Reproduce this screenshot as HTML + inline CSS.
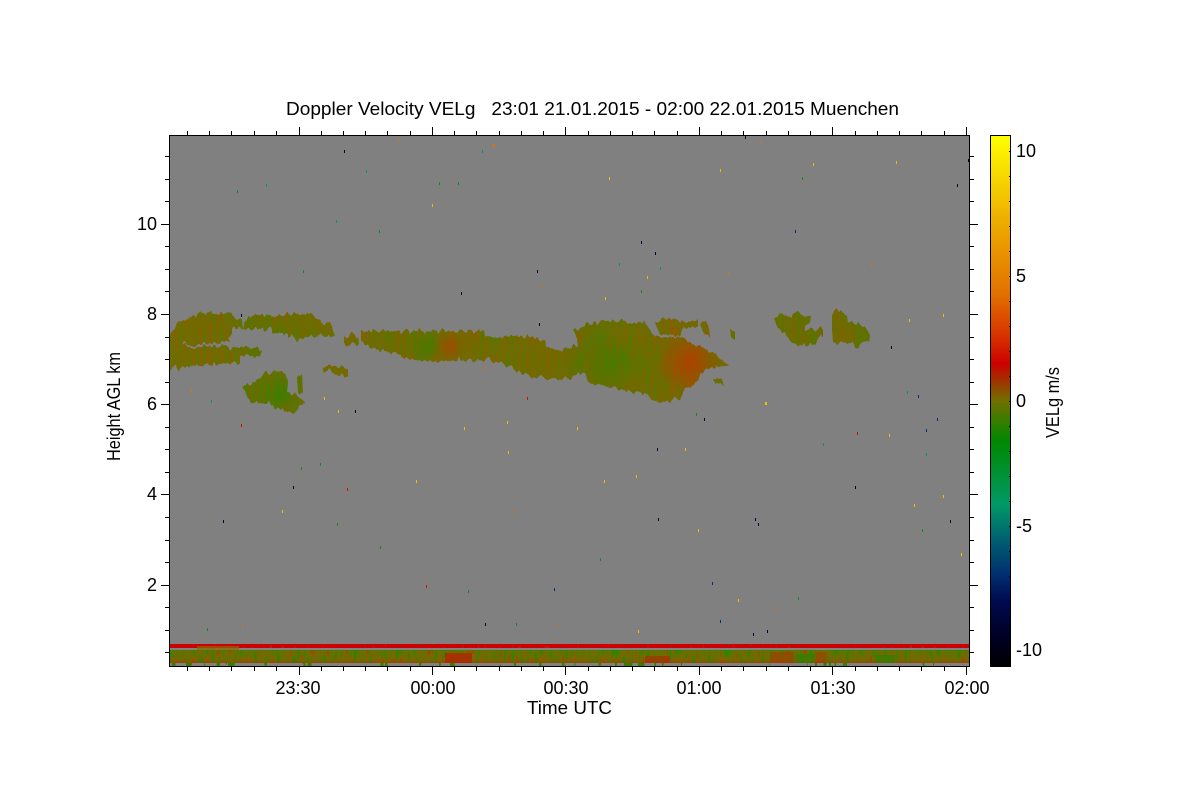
<!DOCTYPE html>
<html lang="en">
<head>
<meta charset="utf-8">
<title>Doppler Velocity VELg</title>
<style>
html,body{margin:0;padding:0;background:#fff}
svg{display:block}
text{font-family:"Liberation Sans",sans-serif;font-size:18px;fill:#000}
</style>
</head>
<body>
<svg width="1200" height="800" viewBox="0 0 1200 800" xmlns="http://www.w3.org/2000/svg">
<defs>
<linearGradient id="cb" x1="0" y1="135" x2="0" y2="667" gradientUnits="userSpaceOnUse">
<stop offset="0" stop-color="#ffff00"/>
<stop offset=".16" stop-color="#eeae00"/>
<stop offset=".30" stop-color="#e27000"/>
<stop offset=".385" stop-color="#d62c00"/>
<stop offset=".43" stop-color="#cc0000"/>
<stop offset=".47" stop-color="#954000"/>
<stop offset=".5" stop-color="#707000"/>
<stop offset=".575" stop-color="#008800"/>
<stop offset=".695" stop-color="#009966"/>
<stop offset=".76" stop-color="#006070"/>
<stop offset=".825" stop-color="#003070"/>
<stop offset=".875" stop-color="#000a50"/>
<stop offset=".95" stop-color="#000020"/>
<stop offset="1" stop-color="#000000"/>
</linearGradient>
<linearGradient id="cg" x1="169" y1="0" x2="880" y2="0" gradientUnits="userSpaceOnUse">
<stop offset="0" stop-color="#7a6b00"/>
<stop offset=".05" stop-color="#7d6600"/>
<stop offset=".09" stop-color="#6f6c00"/>
<stop offset=".115" stop-color="#517800"/>
<stop offset=".18" stop-color="#6b6f00"/>
<stop offset=".22" stop-color="#7a6800"/>
<stop offset=".27" stop-color="#7a6800"/>
<stop offset=".33" stop-color="#6f6c00"/>
<stop offset=".365" stop-color="#6a7000"/>
<stop offset=".395" stop-color="#8a5f00"/>
<stop offset=".42" stop-color="#766a00"/>
<stop offset=".48" stop-color="#6f6c00"/>
<stop offset=".53" stop-color="#7f6500"/>
<stop offset=".58" stop-color="#626f00"/>
<stop offset=".64" stop-color="#647200"/>
<stop offset=".68" stop-color="#6e6d00"/>
<stop offset=".71" stop-color="#8c5e00"/>
<stop offset=".76" stop-color="#7a6800"/>
<stop offset=".85" stop-color="#6a6e00"/>
<stop offset=".91" stop-color="#5d7200"/>
<stop offset=".95" stop-color="#7a6800"/>
<stop offset=".97" stop-color="#567600"/>
<stop offset="1" stop-color="#7a6600"/>
</linearGradient>
<radialGradient id="hot" cx="690" cy="363" r="32" gradientUnits="userSpaceOnUse">
<stop offset="0" stop-color="#b04000" stop-opacity=".95"/>
<stop offset=".6" stop-color="#a04c00" stop-opacity=".6"/>
<stop offset="1" stop-color="#904f00" stop-opacity="0"/>
</radialGradient>
<radialGradient id="hot2" cx="449" cy="347" r="16" gradientUnits="userSpaceOnUse">
<stop offset="0" stop-color="#a04c00" stop-opacity=".9"/>
<stop offset="1" stop-color="#904f00" stop-opacity="0"/>
</radialGradient>
<radialGradient id="grn1" cx="426" cy="346" r="16" gradientUnits="userSpaceOnUse">
<stop offset="0" stop-color="#3f7d00" stop-opacity=".8"/>
<stop offset="1" stop-color="#3f7d00" stop-opacity="0"/>
</radialGradient>
<radialGradient id="grn2" cx="280" cy="395" r="22" gradientUnits="userSpaceOnUse">
<stop offset="0" stop-color="#2f8200" stop-opacity=".75"/>
<stop offset="1" stop-color="#3f7d00" stop-opacity="0"/>
</radialGradient>
<radialGradient id="grn3" cx="610" cy="362" r="32" gradientUnits="userSpaceOnUse">
<stop offset="0" stop-color="#3f7d00" stop-opacity=".55"/>
<stop offset="1" stop-color="#3f7d00" stop-opacity="0"/>
</radialGradient>

<filter id="jag" filterUnits="userSpaceOnUse" x="160" y="300" width="730" height="125" color-interpolation-filters="sRGB">
<feTurbulence type="fractalNoise" baseFrequency="0.22 0.03" numOctaves="2" seed="7" result="n"/>
<feComponentTransfer in="n" result="m">
<feFuncG type="linear" slope="0" intercept="0.5"/>
<feFuncA type="linear" slope="0" intercept="1"/>
</feComponentTransfer>
<feDisplacementMap in="SourceGraphic" in2="m" scale="11" xChannelSelector="G" yChannelSelector="R"/>
</filter>

<filter id="cloudN" filterUnits="userSpaceOnUse" x="169" y="300" width="720" height="120" color-interpolation-filters="sRGB">
<feTurbulence type="fractalNoise" baseFrequency="0.3 0.04" numOctaves="2" seed="11"/>
<feColorMatrix type="matrix" values="1 0 0 0 0 1 0 0 0 0 1 0 0 0 0 0 0 0 0 1"/>
<feComponentTransfer>
<feFuncR type="table" tableValues=".28 .28 .3 .36 .42 .5 .56 .6 .6"/>
<feFuncG type="table" tableValues=".5 .5 .49 .46 .43 .39 .36 .34 .34"/>
<feFuncB type="linear" slope="0" intercept="0"/>
</feComponentTransfer>
</filter>

<filter id="bandN" filterUnits="userSpaceOnUse" x="169" y="650" width="801" height="13" color-interpolation-filters="sRGB">
<feTurbulence type="fractalNoise" baseFrequency="0.26 0.07" numOctaves="2" seed="4"/>
<feColorMatrix type="matrix" values="1 0 0 0 0 1 0 0 0 0 1 0 0 0 0 0 0 0 0 1"/>
<feComponentTransfer>
<feFuncR type="table" tableValues=".1 .1 .15 .3 .42 .5 .6 .68 .72"/>
<feFuncG type="table" tableValues=".55 .55 .53 .48 .43 .4 .3 .2 .15"/>
<feFuncB type="linear" slope="0" intercept="0"/>
</feComponentTransfer>
</filter>

<filter id="redN" filterUnits="userSpaceOnUse" x="169" y="644" width="801" height="4" color-interpolation-filters="sRGB">
<feTurbulence type="fractalNoise" baseFrequency="0.4 0.2" numOctaves="1" seed="9"/>
<feColorMatrix type="matrix" values="1 0 0 0 0 1 0 0 0 0 1 0 0 0 0 0 0 0 0 1"/>
<feComponentTransfer>
<feFuncR type="table" tableValues=".6 .68 .76 .8 .8 .8 .8 .8 .8"/>
<feFuncG type="table" tableValues=".3 .22 .1 0 0 0 0 0 0"/>
<feFuncB type="linear" slope="0" intercept="0"/>
</feComponentTransfer>
</filter>

<filter id="fringe" filterUnits="userSpaceOnUse" x="169" y="663" width="801" height="3" color-interpolation-filters="sRGB">
<feTurbulence type="fractalNoise" baseFrequency="0.18 0.01" numOctaves="2" seed="15"/>
<feColorMatrix type="matrix" values="0 0 0 0 .2 0 0 0 0 .5 0 0 0 0 0 3.5 0 0 0 -1.95"/>
<feComponentTransfer><feFuncA type="discrete" tableValues="0 1 1"/></feComponentTransfer>
</filter>

<linearGradient id="bandV" x1="0" y1="650" x2="0" y2="663" gradientUnits="userSpaceOnUse">
<stop offset="0" stop-color="#3f8000" stop-opacity=".35"/>
<stop offset=".5" stop-color="#707000" stop-opacity="0"/>
<stop offset="1" stop-color="#b03000" stop-opacity=".5"/>
</linearGradient>

<clipPath id="cl">
<polygon points="169,336 175,326 182,319 196,317 198,314 232,313 234,319 242,321 243,328 232,329 232,334 228,336 230,339 225,343 192,344 183,344 182,346 200,346 225,347 258,348 262,351 258,357 240,357 240,363 205,365 170,368 169,368"/>
<polygon points="245,319 253,315 312,315 317,321 330,323 335,335 312,336 308,338 295,338 288,336 288,333 272,333 272,329 243,329"/>
<polygon points="344,337 352,334 358,335 359,343 350,343 344,344"/>
<polygon points="323,366 338,366 348,369 348,376 335,375 330,371 323,371"/>
<polygon points="242,384 257,382 263,374 285,372 288,382 287,392 297,396 305,402 292,413 275,408 270,403 253,403 247,398 245,389"/>
<polygon points="297,377 302,376 303,393 298,393"/>
<polygon points="361,331 484,331 485,337 523,337 527,334 529,337 545,341 546,347 553,351 573,348 577,349 585,365 580,374 570,379 550,378 523,374 513,368 503,364 490,359 430,361 400,356 383,351 373,349 361,343"/>
<polygon points="573,332 583,326 603,321 643,322 650,329 655,337 680,337 687,341 693,346 713,351 718,356 729,365 712,368 700,373 698,381 685,389 680,398 657,403 645,393 620,389 590,383 583,371 570,376 570,347 578,347 577,339"/>
<polygon points="655,322 663,319 683,322 698,319 698,326 683,328 680,336 660,334"/>
<polygon points="700,324 706,321 709,329 710,336 703,333"/>
<polygon points="730,330 735,329 735,338 731,338"/>
<polygon points="713,379 722,381 724,386 716,385"/>
<polygon points="774,319 782,314 790,317 797,314 811,316 810,323 805,324 805,329 823,329 823,336 815,343 808,346 802,344 792,343 785,334 778,329"/>
<polygon points="832,312 837,310 847,314 848,321 857,322 865,327 870,333 869,341 858,346 842,343 833,341 832,328"/>
</clipPath>
<clipPath id="plot"><rect x="169" y="135" width="801" height="532"/></clipPath>
</defs>

<rect width="1200" height="800" fill="#fff"/>
<rect x="169" y="135" width="801" height="532" fill="#808080"/>

<g clip-path="url(#plot)">
<g filter="url(#jag)">
<g clip-path="url(#cl)">
<rect x="169" y="300" width="720" height="120" fill="url(#cg)"/>
<rect x="169" y="300" width="720" height="120" filter="url(#cloudN)" opacity=".55"/>
<rect x="650" y="325" width="85" height="75" fill="url(#hot)"/>
<rect x="430" y="328" width="40" height="36" fill="url(#hot2)"/>
<rect x="405" y="328" width="40" height="36" fill="url(#grn1)"/>
<rect x="240" y="370" width="70" height="45" fill="url(#grn2)"/>
<rect x="575" y="325" width="70" height="75" fill="url(#grn3)"/>
</g>
</g>
</g>

<g shape-rendering="crispEdges">
<rect x="169" y="644" width="801" height="4" filter="url(#redN)"/>
<rect x="169" y="650" width="801" height="13" filter="url(#bandN)"/>
<rect x="169" y="650" width="801" height="13" fill="url(#bandV)"/>
<rect x="169" y="663" width="801" height="3" filter="url(#fringe)"/>
<rect x="445" y="653" width="27" height="10" fill="#c01800" opacity=".7"/>
<rect x="645" y="656" width="25" height="7" fill="#c01800" opacity=".5"/>
<rect x="770" y="652" width="24" height="11" fill="#b03000" opacity=".5"/>
<rect x="815" y="652" width="12" height="11" fill="#b03000" opacity=".45"/>
<rect x="795" y="654" width="20" height="9" fill="#108c00" opacity=".45"/>
<rect x="875" y="655" width="20" height="8" fill="#108c00" opacity=".45"/>
<rect x="197" y="646" width="42" height="4" fill="#8a6a00" opacity=".7"/>
</g>

<g shape-rendering="crispEdges">
<path fill="#000030" d="M344 150h1v3h-1zM241 314h1v3h-1zM461 292h1v3h-1zM537 270h1v3h-1zM641 241h1v3h-1zM655 252h1v3h-1zM539 323h1v3h-1zM355 410h1v3h-1zM704 418h1v3h-1zM957 184h1v3h-1zM968 159h1v3h-1zM745 136h1v3h-1zM657 448h1v3h-1zM293 486h1v3h-1zM223 520h1v3h-1zM658 518h1v3h-1zM755 518h1v3h-1zM758 523h1v3h-1zM950 520h1v3h-1zM855 486h1v3h-1zM485 623h1v3h-1zM753 633h1v3h-1zM767 630h1v3h-1zM891 346h1v3h-1z"/>
<path fill="#003070" d="M795 230h1v3h-1zM918 395h1v3h-1zM937 418h1v3h-1zM926 429h1v3h-1zM712 582h1v3h-1zM554 588h1v3h-1zM720 620h1v3h-1z"/>
<path fill="#009966" d="M366 170h1v3h-1zM266 184h1v3h-1zM336 220h1v3h-1zM619 263h1v3h-1zM660 267h1v3h-1zM213 334h1v3h-1zM211 400h1v3h-1zM907 391h1v3h-1zM823 443h1v3h-1zM926 453h1v3h-1zM482 150h1v3h-1z"/>
<path fill="#009020" d="M237 190h1v3h-1zM379 230h1v3h-1zM303 270h1v3h-1zM439 182h1v3h-1zM458 182h1v3h-1zM802 177h1v3h-1zM641 290h1v3h-1zM696 413h1v3h-1zM301 467h1v3h-1zM320 463h1v3h-1zM337 523h1v3h-1zM922 529h1v3h-1zM380 546h1v3h-1zM600 558h1v3h-1zM798 597h1v3h-1zM516 623h1v3h-1zM207 628h1v3h-1zM468 590h1v3h-1z"/>
<path fill="#f0c000" d="M609 177h1v3h-1zM720 169h1v3h-1zM813 163h1v3h-1zM896 161h1v3h-1zM647 276h1v3h-1zM605 297h1v3h-1zM943 314h1v3h-1zM909 319h1v3h-1zM324 397h1v3h-1zM338 410h1v3h-1zM464 427h1v3h-1zM507 421h1v3h-1zM577 427h1v3h-1zM765 402h2v3h-2zM889 434h1v3h-1zM685 448h1v3h-1zM508 451h1v3h-1zM416 480h1v3h-1zM604 480h1v3h-1zM636 475h1v3h-1zM943 495h1v3h-1zM282 510h1v3h-1zM914 504h1v3h-1zM698 529h1v3h-1zM961 553h1v3h-1zM738 599h1v3h-1zM638 630h1v3h-1zM432 204h1v3h-1z"/>
<path fill="#e27000" d="M398 139h1v3h-1zM493 144h2v3h-2zM760 140h1v3h-1zM540 284h1v3h-1zM728 272h1v3h-1zM871 263h1v3h-1zM485 367h1v3h-1zM191 389h1v3h-1zM513 510h1v3h-1zM774 607h1v3h-1zM556 625h1v3h-1zM242 625h1v3h-1z"/>
<path fill="#d01000" d="M527 397h1v3h-1zM241 424h1v3h-1zM857 432h1v3h-1zM347 488h1v3h-1zM426 585h1v3h-1z"/>
</g>

<rect x="169.5" y="135.5" width="800" height="531" fill="none" stroke="#000" stroke-width="1" shape-rendering="crispEdges"/>
<path stroke="#000" stroke-width="1" fill="none" shape-rendering="crispEdges" d="
M161 224.5h8M161 314.5h8M161 404.5h8M161 494.5h8M161 585.5h8
M165 156.5h4M165 179.5h4M165 201.5h4M165 246.5h4M165 269.5h4M165 291.5h4M165 337.5h4M165 359.5h4M165 382.5h4M165 427.5h4M165 449.5h4M165 472.5h4M165 517.5h4M165 540.5h4M165 562.5h4M165 607.5h4M165 630.5h4M165 652.5h4
M970 224.5h8M970 314.5h8M970 404.5h8M970 494.5h8M970 585.5h8
M970 156.5h4M970 179.5h4M970 201.5h4M970 246.5h4M970 269.5h4M970 291.5h4M970 337.5h4M970 359.5h4M970 382.5h4M970 427.5h4M970 449.5h4M970 472.5h4M970 517.5h4M970 540.5h4M970 562.5h4M970 607.5h4M970 630.5h4M970 652.5h4
M299.5 667v8M432.5 667v8M565.5 667v8M699.5 667v8M832.5 667v8M966.5 667v8
M187.5 667v4M209.5 667v4M231.5 667v4M254.5 667v4M276.5 667v4M321.5 667v4M343.5 667v4M365.5 667v4M387.5 667v4M410.5 667v4M454.5 667v4M476.5 667v4M499.5 667v4M521.5 667v4M543.5 667v4M588.5 667v4M610.5 667v4M632.5 667v4M654.5 667v4M677.5 667v4M721.5 667v4M743.5 667v4M766.5 667v4M788.5 667v4M810.5 667v4M855.5 667v4M877.5 667v4M899.5 667v4M921.5 667v4M944.5 667v4
M299.5 127v8M432.5 127v8M565.5 127v8M699.5 127v8M832.5 127v8M966.5 127v8
M187.5 131v4M209.5 131v4M231.5 131v4M254.5 131v4M276.5 131v4M321.5 131v4M343.5 131v4M365.5 131v4M387.5 131v4M410.5 131v4M454.5 131v4M476.5 131v4M499.5 131v4M521.5 131v4M543.5 131v4M588.5 131v4M610.5 131v4M632.5 131v4M654.5 131v4M677.5 131v4M721.5 131v4M743.5 131v4M766.5 131v4M788.5 131v4M810.5 131v4M855.5 131v4M877.5 131v4M899.5 131v4M921.5 131v4M944.5 131v4"/>

<rect x="990.5" y="135.5" width="20" height="531" fill="url(#cb)" stroke="#000" stroke-width="1" shape-rendering="crispEdges"/>
<path stroke="#000" stroke-width="1" fill="none" shape-rendering="crispEdges" d="M1009 151.5h2M1009 176.5h2M1009 201.5h2M1009 226.5h2M1009 251.5h2M1009 276.5h2M1009 301.5h2M1009 326.5h2M1009 351.5h2M1009 376.5h2M1009 401.5h2M1009 426.5h2M1009 451.5h2M1009 476.5h2M1009 501.5h2M1009 526.5h2M1009 551.5h2M1009 576.5h2M1009 601.5h2M1009 626.5h2M1009 651.5h2"/>

<text x="286" y="115" textLength="613" lengthAdjust="spacingAndGlyphs" xml:space="preserve">Doppler Velocity VELg   23:01 21.01.2015 - 02:00 22.01.2015 Muenchen</text>

<text x="157" y="230" text-anchor="end">10</text>
<text x="157" y="320" text-anchor="end">8</text>
<text x="157" y="410" text-anchor="end">6</text>
<text x="157" y="500" text-anchor="end">4</text>
<text x="157" y="591" text-anchor="end">2</text>

<text x="298" y="694" text-anchor="middle">23:30</text>
<text x="433" y="694" text-anchor="middle">00:00</text>
<text x="566" y="694" text-anchor="middle">00:30</text>
<text x="699" y="694" text-anchor="middle">01:00</text>
<text x="833" y="694" text-anchor="middle">01:30</text>
<text x="967" y="694" text-anchor="middle">02:00</text>

<text x="527" y="714" textLength="85" lengthAdjust="spacingAndGlyphs">Time UTC</text>
<text transform="translate(120,461) rotate(-90)" textLength="109" lengthAdjust="spacingAndGlyphs">Height AGL km</text>
<text transform="translate(1059,438) rotate(-90)" textLength="71" lengthAdjust="spacingAndGlyphs">VELg m/s</text>

<text x="1036" y="157" text-anchor="end">10</text>
<text x="1026" y="282" text-anchor="end">5</text>
<text x="1026" y="407" text-anchor="end">0</text>
<text x="1016" y="532">-5</text>
<text x="1016" y="656">-10</text>
</svg>
</body>
</html>
